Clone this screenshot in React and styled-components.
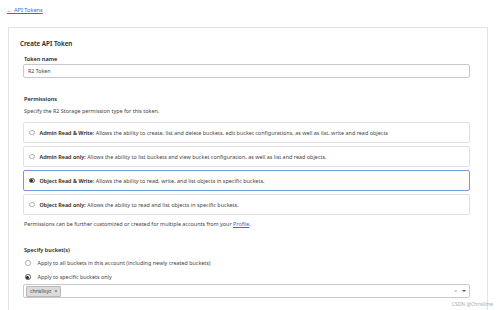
import React from 'react';
import styled, { createGlobalStyle } from 'styled-components';

const GlobalStyle = createGlobalStyle`
  body {
    margin: 0;
    background: #ffffff;
    font-family: 'Noto Sans', 'Open Sans', sans-serif;
    color: #222;
  }
`;

const Page = styled.div`
  width: 500px;
  height: 310px;
  overflow: hidden;
  position: relative;
  padding: 6px 0 0 8px;
  box-sizing: border-box;
`;

const BackLink = styled.a`
  display: block;
  width: max-content;
  font-size: 5.6px;
  color: #2f6fd6;
  text-decoration: underline;
  line-height: 8px;
  margin-left: -1px;
`;

const Card = styled.section`
  margin-top: 13px;
  width: 480px;
  height: 300px;
  border: 1px solid #e3e3e3;
  border-bottom: none;
  box-sizing: border-box;
  padding: 11px 17px 0 11px;
`;

const Title = styled.h2`
  margin: 0 0 7px 0;
  font-size: 6.3px;
  font-weight: 600;
  color: #222;
  line-height: 9px;
`;

const Content = styled.div`
  padding-left: 3px;
`;

const Label = styled.div`
  font-size: 5.6px;
  font-weight: 600;
  color: #222;
  line-height: 8px;
  margin-left: 1px;
  margin-bottom: ${p => p.$mb || 0}px;
`;

const Hint = styled.div`
  font-size: 5.4px;
  color: #444;
  line-height: 8px;
  margin-left: 1px;
  margin-bottom: ${p => p.$mb || 0}px;

  a {
    color: #2f6fd6;
    text-decoration: underline;
  }
`;

const Input = styled.div`
  height: 14px;
  border: 1px solid #c9c9c9;
  border-radius: 2px;
  box-sizing: border-box;
  display: flex;
  align-items: center;
  padding-left: 4px;
  font-size: 5.3px;
  color: #444;
  margin-bottom: ${p => p.$mb || 0}px;
`;

const Options = styled.div`
  display: flex;
  flex-direction: column;
  gap: 3px;
  margin: 7px 0 5px 0;
`;

const Option = styled.div`
  height: 21px;
  box-sizing: border-box;
  border: 1px solid ${p => (p.$active ? '#6f9be0' : '#e2e2e2')};
  background: ${p => (p.$active ? '#fffdf9' : '#ffffff')};
  border-radius: 2px;
  display: flex;
  align-items: center;
  padding-left: 5px;
  gap: 5px;
  font-size: 5.45px;
  color: #444;
  white-space: nowrap;

  b {
    font-weight: 600;
    color: #222;
  }
`;

const Radio = styled.span`
  width: 5.5px;
  height: 5.5px;
  border-radius: 50%;
  border: 1px solid ${p => (p.$checked ? '#555' : '#aaa')};
  box-sizing: border-box;
  display: inline-flex;
  align-items: center;
  justify-content: center;
  flex-shrink: 0;

  &::after {
    content: '';
    width: 3px;
    height: 3px;
    border-radius: 50%;
    background: ${p => (p.$checked ? '#222' : 'transparent')};
  }
`;

const RadioRow = styled.div`
  display: flex;
  align-items: center;
  gap: 7px;
  height: 14px;
  padding-left: 2px;
  font-size: 5.4px;
  color: #444;
`;

const Select = styled.div`
  height: 14px;
  border: 1px solid #c9c9c9;
  border-radius: 2px;
  box-sizing: border-box;
  display: flex;
  align-items: center;
  padding: 0 3px 0 2px;
`;

const Tag = styled.span`
  display: inline-flex;
  align-items: center;
  gap: 3px;
  height: 9px;
  padding: 0 3px;
  background: #dcdcdc;
  border: 1px solid #b8b8b8;
  border-radius: 1px;
  font-size: 5px;
  color: #444;
`;

const SelectIcons = styled.span`
  margin-left: auto;
  display: flex;
  align-items: center;
  gap: 5px;
  font-size: 5px;
  color: #999;
`;

const Caret = styled.span`
  width: 0;
  height: 0;
  border-left: 2px solid transparent;
  border-right: 2px solid transparent;
  border-top: 2.5px solid #555;
`;

const Watermark = styled.div`
  position: absolute;
  right: 7px;
  bottom: 2px;
  font-size: 5px;
  line-height: 7px;
  color: #aaa;
`;

export default function App() {
  return (
    <>
      <GlobalStyle />
      <Page>
        <BackLink href="#">&larr; API Tokens</BackLink>
        <Card>
          <Title>Create API Token</Title>
          <Content>
            <Label $mb={1}>Token name</Label>
            <Input $mb={17}>R2 Token</Input>

            <Label $mb={4}>Permissions</Label>
            <Hint>Specify the R2 Storage permission type for this token.</Hint>
            <Options>
              <Option>
                <Radio />
                <span><b>Admin Read &amp; Write:</b> Allows the ability to create, list and delete buckets, edit bucket configurations, as well as list, write and read objects</span>
              </Option>
              <Option>
                <Radio />
                <span><b>Admin Read only:</b> Allows the ability to list buckets and view bucket configuration, as well as list and read objects.</span>
              </Option>
              <Option $active>
                <Radio $checked />
                <span><b>Object Read &amp; Write:</b> Allows the ability to read, write, and list objects in specific buckets.</span>
              </Option>
              <Option>
                <Radio />
                <span><b>Object Read only:</b> Allows the ability to read and list objects in specific buckets.</span>
              </Option>
            </Options>
            <Hint $mb={18}>
              Permissions can be further customized or created for multiple accounts from your <a href="#">Profile</a>.
            </Hint>

            <Label $mb={2}>Specify bucket(s)</Label>
            <RadioRow>
              <Radio />
              Apply to all buckets in this account (including newly created buckets)
            </RadioRow>
            <RadioRow>
              <Radio $checked />
              Apply to specific buckets only
            </RadioRow>
            <Select>
              <Tag>chrisllxyz <span>×</span></Tag>
              <SelectIcons>
                <span>×</span>
                <Caret />
              </SelectIcons>
            </Select>
          </Content>
        </Card>
        <Watermark>CSDN @Chrisilme</Watermark>
      </Page>
    </>
  );
}
